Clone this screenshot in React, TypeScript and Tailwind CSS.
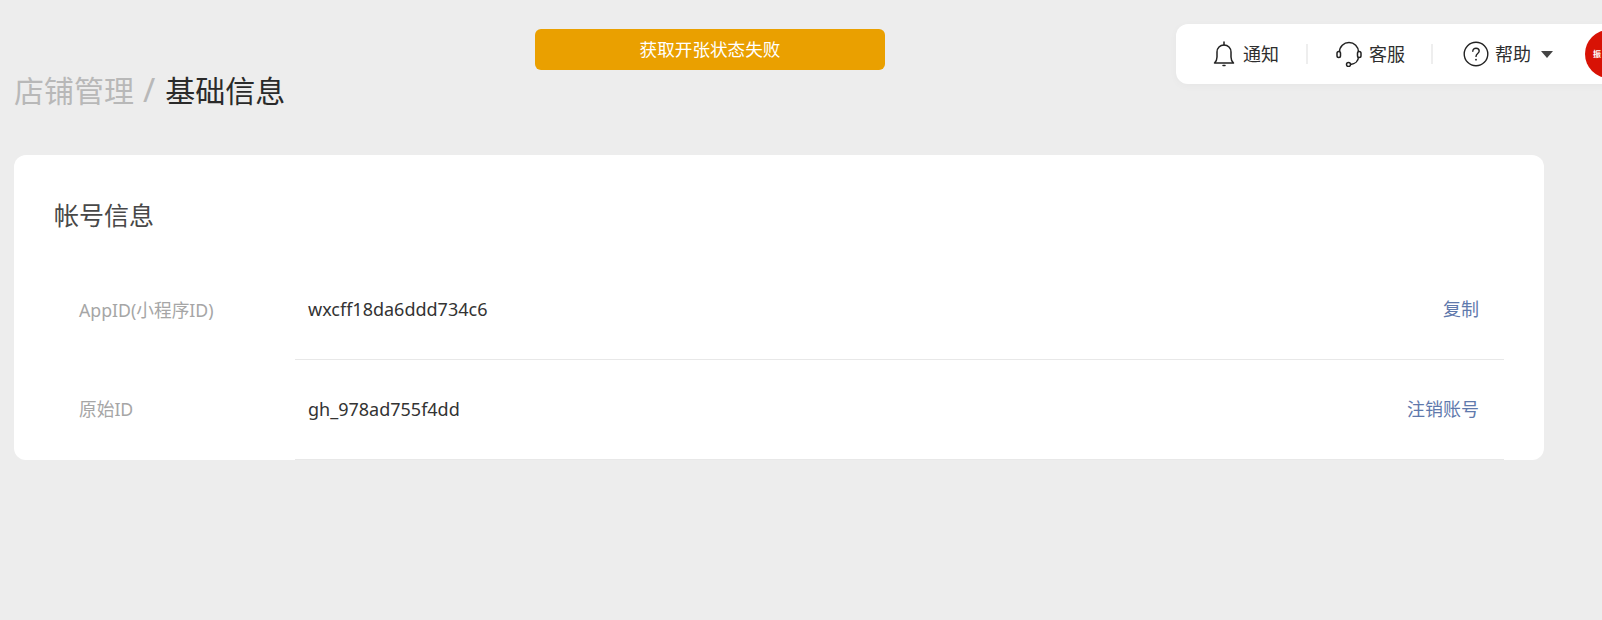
const font = { fontFamily: '"Noto Sans", "Noto Sans CJK SC", sans-serif' };

function BellIcon() {
  return (
    <svg width="22" height="26" viewBox="0 0 22 26" fill="none" stroke="#222" strokeWidth="1.5" className="shrink-0">
      <path d="M1.5 22c1.800-1.600 2.500-3.300 2.500-6v-5C4 6.800 7 4 11 4s7 2.800 7 7v5c0 2.700 0.700 4.400 2.500 6z" strokeLinejoin="round" />
      <path d="M11 1v3M10 24.500h2" strokeLinecap="round" />
    </svg>
  );
}

function HeadsetIcon() {
  return (
    <svg width="26" height="26" viewBox="0 0 26 26" fill="none" stroke="#222" strokeWidth="1.5" className="shrink-0">
      <path d="M3.500 11C3.500 5.500 7.800 1.500 13 1.500s9.500 4 9.500 9.500v4.500c0 4.500-3.500 7.500-8 8" />
      <rect x="1" y="10.500" width="3.500" height="6" rx="1.750" fill="#fff" />
      <rect x="21.500" y="10.500" width="3.500" height="6" rx="1.750" fill="#fff" />
      <circle cx="12.500" cy="23.500" r="2" fill="#fff" />
    </svg>
  );
}

function HelpIcon() {
  return (
    <svg width="26" height="26" viewBox="0 0 26 26" fill="none" stroke="#222" strokeWidth="1.4" className="shrink-0">
      <circle cx="13" cy="13" r="11.800" />
      <path d="M9.800 10.300c0-1.900 1.400-3.100 3.200-3.100s3.200 1.200 3.200 2.900c0 2.500-3.200 2.500-3.200 5.300" strokeLinecap="round" />
      <circle cx="13" cy="18.700" r="0.900" fill="#222" stroke="none" />
    </svg>
  );
}

function Row(props: { label: string; value: string; action: string; labelTop: string; valueTop: string }) {
  return (
    <div className="flex h-[100px]">
      <div className={`w-[281px] shrink-0 pl-[65px] text-[17.7px] leading-[26px] text-[#a6a6a6] ${props.labelTop}`}>
        {props.label}
      </div>
      <div className={`flex w-[1209px] justify-between border-b border-[#e8e8e8] pl-[13px] pr-[25px] text-[18px] leading-[26px] ${props.valueTop}`}>
        <span className="text-[#333333]">{props.value}</span>
        <span className="text-[#5f79ac]">{props.action}</span>
      </div>
    </div>
  );
}

export default function App() {
  return (
    <div className="relative h-[620px] w-full overflow-hidden bg-[#ededed]" style={font}>
      {/* toast */}
      <div className="absolute left-[535px] top-[29px] flex h-[41px] w-[350px] items-center justify-center rounded-md bg-[#eaa000] text-[17.6px] text-white">
        获取开张状态失败
      </div>

      {/* top right nav */}
      <div className="absolute left-[1176px] top-[24px] flex h-[60px] w-[440px] items-center whitespace-nowrap rounded-l-xl bg-white pl-[37px] text-[18px] text-[#2e2e2e] shadow-[0_2px_8px_rgba(0,0,0,0.03)]">
        <BellIcon />
        <span className="ml-[8px] w-[36px] shrink-0">通知</span>
        <div className="ml-[27px] h-[20px] w-[2px] shrink-0 bg-[#eeeeee]" />
        <div className="ml-[28px] shrink-0"><HeadsetIcon /></div>
        <span className="ml-[7px] w-[36px] shrink-0">客服</span>
        <div className="ml-[26px] h-[20px] w-[2px] shrink-0 bg-[#eeeeee]" />
        <div className="ml-[30px] shrink-0"><HelpIcon /></div>
        <span className="ml-[6px] w-[36px] shrink-0">帮助</span>
        <div className="ml-[10px] h-0 w-0 shrink-0 border-x-[6px] border-t-[7px] border-x-transparent border-t-[#444]" />
        <div className="ml-[32px] flex h-[48px] w-[48px] shrink-0 items-center rounded-full bg-[#d81205] pl-[8px] text-[8px] font-bold text-white">
          振
        </div>
      </div>

      <div className="px-[14px] pt-[66px]">
        <div className="flex h-[48px] items-center text-[30px]">
          <span className="text-[#b8b8b8]">店铺管理</span>
          <span className="ml-[9px] mr-[10px] text-[33px] text-[#b8b8b8]">/</span>
          <span className="text-[#2a2a2a]">基础信息</span>
        </div>

        <div className="mt-[41px] h-[305px] w-[1530px] rounded-xl bg-white">
          <div className="pl-[40px] pt-[42px] text-[25px] leading-[36px] text-[#484848]">帐号信息</div>
          <div className="mt-[27px]">
            <Row label="AppID(小程序ID)" value="wxcff18da6ddd734c6" action="复制" labelTop="pt-[37px]" valueTop="pt-[36px]" />
            <Row label="原始ID" value="gh_978ad755f4dd" action="注销账号" labelTop="pt-[36px]" valueTop="pt-[36px]" />
          </div>
        </div>
      </div>
    </div>
  );
}
